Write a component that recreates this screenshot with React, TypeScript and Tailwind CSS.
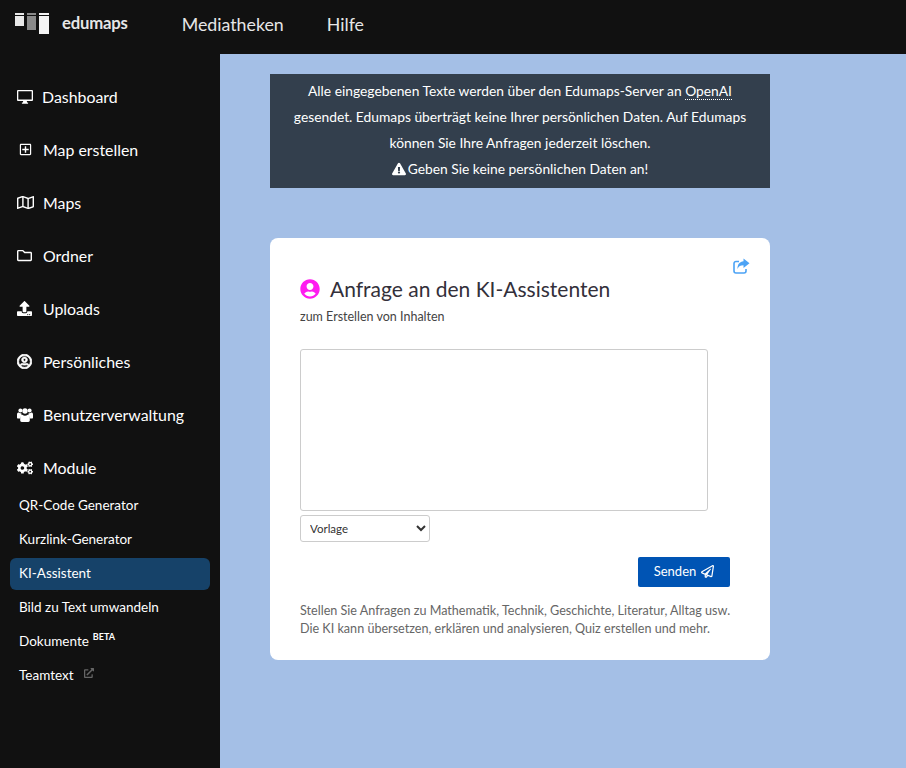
import {
  FaCogs,
  FaExclamationTriangle,
  FaExternalLinkAlt,
  FaRegFolder,
  FaRegMap,
  FaRegPaperPlane,
  FaRegPlusSquare,
  FaRegUserCircle,
  FaUpload,
  FaUserCircle,
} from "react-icons/fa";

function DesktopIcon({ className }: { className?: string }) {
  return (
    <svg viewBox="0 0 16 14" className={className} fill="currentColor">
      <path d="M1 0h14a1 1 0 0 1 1 1v9a1 1 0 0 1-1 1H1a1 1 0 0 1-1-1V1a1 1 0 0 1 1-1zm.3 1.300v8.200h13.400V1.300z" />
      <path d="M6.200 11h3.600l.3 1.600h1v1.200H4.900v-1.200h1z" />
    </svg>
  );
}

function UsersIcon({ className }: { className?: string }) {
  return (
    <svg viewBox="0 0 16 14" className={className} fill="currentColor">
      <circle cx="3.400" cy="2.400" r="2" />
      <circle cx="12.600" cy="2.400" r="2" />
      <circle cx="8" cy="3" r="2.700" />
      <path d="M0 6.500c0-1.300.8-1.900 1.700-1.900.5.500 1.100.700 1.700.700.300 0 .6 0 .9-.2-.1 1 .3 1.900 1 2.500-1.200.300-2 1.300-2.100 2.900H1c-.6 0-1-.4-1-1z" />
      <path d="M16 6.500c0-1.300-.8-1.900-1.700-1.900-.5.500-1.100.700-1.700.700-.300 0-.6 0-.9-.2.100 1-.3 1.900-1 2.500 1.200.300 2 1.300 2.100 2.900H15c.6 0 1-.4 1-1z" />
      <path d="M5.400 6.800c.7.600 1.600.900 2.600.900s1.900-.3 2.600-.9c1.300 0 2.200.9 2.200 2.600v2.900c0 1-.6 1.700-1.500 1.700H4.700c-.9 0-1.500-.7-1.500-1.700V9.400c0-1.700.9-2.600 2.200-2.600z" />
    </svg>
  );
}

function ShareIcon({ className }: { className?: string }) {
  return (
    <svg viewBox="0 0 17 16" className={className} fill="currentColor">
      <path d="M6 3.500H3a2 2 0 0 0-2 2V13a2 2 0 0 0 2 2h8a2 2 0 0 0 2-2v-2" fill="none" stroke="currentColor" strokeWidth="1.600" />
      <path d="M10.500 0.500 16.500 5.200 10.500 10V7.200C7.500 7.200 5.500 8 4.500 11 4.300 6.500 6.800 3.600 10.500 3.300z" />
    </svg>
  );
}

const NAV_ITEMS = [
  { label: "Dashboard", icon: DesktopIcon, iconClass: "w-4 h-[14px]", gap: "ml-[9px]" },
  { label: "Map erstellen", icon: FaRegPlusSquare, iconClass: "w-[13px] h-[13px] ml-[2px]", gap: "ml-[11px]" },
  { label: "Maps", icon: FaRegMap, iconClass: "w-[17px] h-[17px]", gap: "ml-[9px]" },
  { label: "Ordner", icon: FaRegFolder, iconClass: "w-[15px] h-[15px]", gap: "ml-[11px]" },
  { label: "Uploads", icon: FaUpload, iconClass: "w-[15px] h-[15px]", gap: "ml-[11px]" },
  { label: "Persönliches", icon: FaRegUserCircle, iconClass: "w-[15px] h-[15px] stroke-[28]", gap: "ml-[11px]" },
  { label: "Benutzerverwaltung", icon: UsersIcon, iconClass: "w-4 h-[14px]", gap: "ml-[10px]" },
  { label: "Module", icon: FaCogs, iconClass: "w-4 h-4", gap: "ml-[10px]" },
];

export default function App() {
  return (
    <div className="flex flex-col w-full h-[768px] overflow-hidden font-['Lato','Liberation_Sans',sans-serif]">
      <header className="flex items-center shrink-0 h-[54px] pb-[6px] bg-[#111111]">
        <svg width="34" height="21" viewBox="0 0 34 21" className="ml-[15px] mb-[2px]">
          <rect x="0" y="0" width="9" height="2" fill="#e8e8e8" />
          <rect x="0" y="3" width="9" height="10" fill="#e8e8e8" />
          <rect x="12" y="0" width="9" height="2" fill="#8a8a8a" />
          <rect x="12" y="3" width="9" height="14" fill="#8a8a8a" />
          <rect x="24" y="0" width="10" height="2" fill="#f4f4f4" />
          <rect x="24" y="3" width="10" height="18" fill="#f4f4f4" />
        </svg>
        <span className="ml-[13px] text-[16.7px] font-bold tracking-[-0.2px] text-[#e6e6e6]">edumaps</span>
        <nav className="flex ml-[54px] text-[17.8px] text-[#e6e6e6] gap-[43px]">
          <span>Mediatheken</span>
          <span>Hilfe</span>
        </nav>
      </header>

      <div className="flex flex-1 min-h-0">
        <aside className="w-[220px] shrink-0 bg-[#111111] text-white pt-[16px]">
          {NAV_ITEMS.map((item) => (
            <div key={item.label} className="flex items-center h-[53px] pl-[17px] text-[15.9px]">
              <item.icon className={item.iconClass} />
              <span className={item.gap}>{item.label}</span>
            </div>
          ))}
          <div className="flex flex-col px-[10px] text-[13.5px] mt-[-5px]">
            <div className="flex items-center h-[34px] pb-[2px] pl-[9px]">QR-Code Generator</div>
            <div className="flex items-center h-[34px] pb-[2px] pl-[9px]">Kurzlink-Generator</div>
            <div className="flex items-center h-[32px] my-px pb-[2px] pl-[9px] rounded-[6px] bg-[#164269]">KI-Assistent</div>
            <div className="flex items-center h-[34px] pb-[2px] pl-[9px]">Bild zu Text umwandeln</div>
            <div className="flex items-center h-[34px] pb-[2px] pl-[9px]">
              Dokumente
              <sup className="ml-[4px] text-[9px] font-bold">BETA</sup>
            </div>
            <div className="flex items-center h-[34px] pb-[2px] pl-[9px]">
              Teamtext
              <FaExternalLinkAlt className="ml-[10px] mb-[4px] w-[10px] h-[10px] text-[#666666]" />
            </div>
          </div>
        </aside>

        <main className="flex-1 bg-[#a4bfe6] pl-[50px] pt-[20px]">
          <div className="w-[500px] pt-[4px] pb-[6px] bg-[#333f4d] text-white text-[13.8px] leading-[26px] text-center">
            <p>
              Alle eingegebenen Texte werden über den Edumaps-Server an{" "}
              <span className="border-b border-dotted border-white">OpenAI</span>
            </p>
            <p>gesendet. Edumaps überträgt keine Ihrer persönlichen Daten. Auf Edumaps</p>
            <p>können Sie Ihre Anfragen jederzeit löschen.</p>
            <p className="flex items-center justify-center">
              <FaExclamationTriangle className="w-[14px] h-[14px] mr-[2px]" />
              Geben Sie keine persönlichen Daten an!
            </p>
          </div>

          <section className="flex flex-col w-[500px] h-[422px] mt-[50px] px-[30px] rounded-[8px] bg-white">
            <div className="flex justify-end pt-[20px] mr-[-10px]">
              <ShareIcon className="w-[17px] h-[16px] text-[#4ca3f5]" />
            </div>
            <div className="flex items-center mt-[-1px] text-[21px] text-[#33303a]">
              <FaUserCircle className="w-[20px] h-[20px] mr-[10px] text-[#ff1cf0]" />
              <h1>Anfrage an den KI-Assistenten</h1>
            </div>
            <p className="mt-[3px] text-[12.5px] text-[#444444]">zum Erstellen von Inhalten</p>
            <textarea className="block w-[408px] h-[162px] mt-[23px] rounded-[3px] border border-[#cccccc] bg-white resize-none" />
            <select className="block w-[130px] h-[27px] mt-[4px] pl-[5px] rounded-[3px] border border-[#cccccc] bg-white text-[11.5px] text-[#333333]">
              <option>Vorlage</option>
            </select>
            <div className="flex justify-end mt-[15px] mr-[10px]">
              <button className="flex items-center justify-center w-[92px] h-[30px] pb-px rounded-[2px] bg-[#0054b4] text-white text-[13px]">
                Senden
                <FaRegPaperPlane className="ml-[5px] w-[13px] h-[13px]" />
              </button>
            </div>
            <p className="mt-[15px] text-[12.6px] leading-[18px] text-[#666666] whitespace-nowrap">
              Stellen Sie Anfragen zu Mathematik, Technik, Geschichte, Literatur, Alltag usw.
              <br />
              Die KI kann übersetzen, erklären und analysieren, Quiz erstellen und mehr.
            </p>
          </section>
        </main>
      </div>
    </div>
  );
}
